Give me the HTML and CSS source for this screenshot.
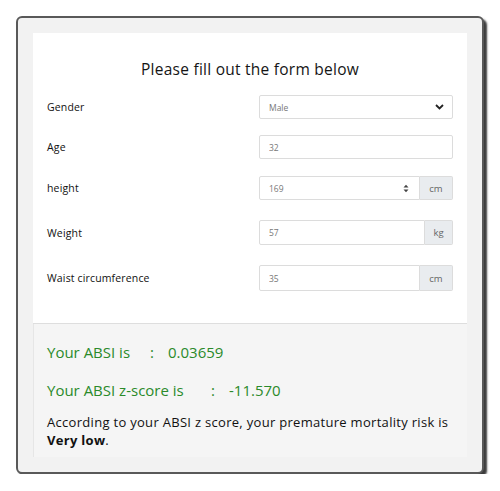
FILE: index.html
```html
<!DOCTYPE html>
<html>
<head>
<meta charset="utf-8">
<link rel="stylesheet" href="styles.css">
</head>
<body>
<div class="frame">
  <div class="card">
    <h2 class="title">Please fill out the form below</h2>
    <div class="row r1">
      <label class="lbl">Gender</label>
      <div class="field box">
        <select class="ctl"><option>Male</option></select>
        <svg class="chev" width="9" height="6" viewBox="0 0 9 6"><path d="M1 1 L4.5 4.5 L8 1" fill="none" stroke="#222" stroke-width="1.8"/></svg>
      </div>
    </div>
    <div class="row r2">
      <label class="lbl">Age</label>
      <div class="field box"><input class="ctl" type="text" value="32"></div>
    </div>
    <div class="row r3">
      <label class="lbl">height</label>
      <div class="field group">
        <div class="box grow"><input class="ctl" type="text" value="169">
          <svg class="spin" width="6" height="9" viewBox="0 0 6 9"><path d="M0.5 3.5 L3 0.8 L5.5 3.5 Z M0.5 5.5 L3 8.2 L5.5 5.5 Z" fill="#444"/></svg>
        </div>
        <span class="addon w33">cm</span>
      </div>
    </div>
    <div class="row r4">
      <label class="lbl">Weight</label>
      <div class="field group">
        <div class="box grow"><input class="ctl" type="text" value="57"></div>
        <span class="addon w28">kg</span>
      </div>
    </div>
    <div class="row r5">
      <label class="lbl">Waist circumference</label>
      <div class="field group">
        <div class="box grow"><input class="ctl" type="text" value="35"></div>
        <span class="addon w33">cm</span>
      </div>
    </div>
  </div>
  <div class="results">
    <p class="res"><span class="k1">Your ABSI is</span><span class="colon">:</span><span>0.03659</span></p>
    <p class="res res2"><span class="k2">Your ABSI z-score is</span><span class="colon">:</span><span>-11.570</span></p>
    <p class="note">According to your ABSI z score, your premature mortality risk is <b>Very low</b>.</p>
  </div>
</div>
</body>
</html>
```
FILE: styles.css
```css
* { box-sizing: border-box; }
body {
  margin: 0;
  background: #fff;
  font-family: "Open Sans", "DejaVu Sans", sans-serif;
  color: #1c1c1c;
}
.frame {
  margin: 16px 0 0 16px;
  width: 468px;
  height: 458px;
  border: 2px solid #595959;
  border-radius: 6px;
  background: #f2f2f2;
  box-shadow: 3px 3px 2px #3d3d3d;
  padding: 15px;
}
.card {
  background: #fff;
  height: 291px;
  padding: 26px 14px 0 14px;
  border-bottom: 1px solid #dedede;
}
.title {
  margin: 0 0 16px 0;
  text-align: center;
  font-size: 15.5px;
  font-weight: 500;
  letter-spacing: 0.25px;
  color: #151515;
  line-height: 20px;
}
.row {
  display: flex;
  align-items: center;
  height: 24px;
}
.r1 { margin-bottom: 16px; }
.r2 { margin-bottom: 17px; }
.r3 { margin-bottom: 20px; }
.r4 { margin-bottom: 20px; height: 25px; }
.r5 { height: 26px; }
.lbl {
  width: 212px;
  font-size: 10.5px;
  font-weight: 500;
  color: #111;
  letter-spacing: 0.15px;
}
.field {
  width: 194px;
  height: 100%;
  display: flex;
}
.box {
  display: flex;
  align-items: center;
  border: 1px solid #dcdcdc;
  border-radius: 2px;
  background: #fff;
  padding: 0 8px 0 9px;
  height: 100%;
}
.field.box { width: 194px; }
.grow { flex: 1; border-radius: 2px 0 0 2px; }
.ctl {
  flex: 1;
  min-width: 0;
  border: none;
  outline: none;
  background: transparent;
  font-family: "Open Sans", "DejaVu Sans", sans-serif;
  font-size: 8.5px;
  color: #777;
  padding: 0;
  margin: 0;
  -webkit-appearance: none;
  appearance: none;
}
.chev { flex: none; }
.spin { flex: none; margin-right: 2px; }
.addon {
  display: flex;
  align-items: center;
  justify-content: center;
  background: #e9ecef;
  border: 1px solid #dcdcdc;
  border-left: none;
  border-radius: 0 2px 2px 0;
  font-size: 9.5px;
  color: #666;
  height: 100%;
}
.w33 { width: 33px; }
.w28 { width: 28px; }
.results {
  height: 133px;
  background: #f5f5f5;
  border-left: 1px solid #e6e6e6;
  padding: 18px 13px 0 13px;
}
.res {
  margin: 0;
  color: #2a8a2a;
  font-size: 15px;
  font-weight: 500;
  line-height: 20px;
  display: flex;
}
.res2 { margin-top: 18px; }
.k1 { width: 103px; }
.k2 { width: 164px; }
.colon { width: 18px; }
.note {
  margin: 13px 0 0 0;
  font-size: 13px;
  letter-spacing: 0.3px;
  line-height: 18px;
  color: #111;
}
.note b { font-weight: 700; }
```
